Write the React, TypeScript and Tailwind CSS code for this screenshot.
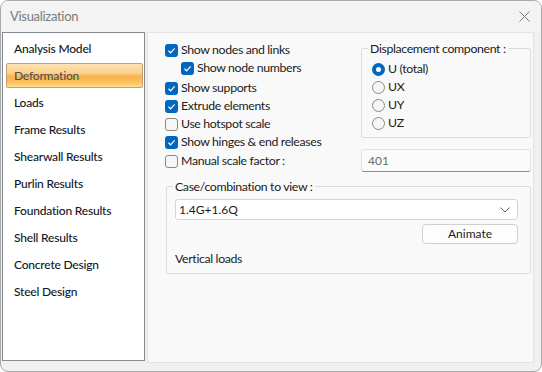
import React from "react";

const font = { fontFamily: 'Lato, "Noto Sans", sans-serif' };

const items = [
  "Analysis Model",
  "Deformation",
  "Loads",
  "Frame Results",
  "Shearwall Results",
  "Purlin Results",
  "Foundation Results",
  "Shell Results",
  "Concrete Design",
  "Steel Design",
];

function Check({ on, label }: { on: boolean; label: string }) {
  return (
    <div className="flex items-center h-[18px]">
      {on ? (
        <span className="w-[13px] h-[13px] rounded-[3px] bg-[#0067c0] flex items-center justify-center">
          <svg width="9" height="9" viewBox="0 0 9 9">
            <path d="M1.5 4.8 L3.6 6.8 L7.6 2.4" fill="none" stroke="#fff" strokeWidth="1.2" />
          </svg>
        </span>
      ) : (
        <span className="w-[13px] h-[13px] rounded-[3px] border border-[#8a8a8a] bg-[#f6f6f6]" />
      )}
      <span className="ml-[3px] text-[12.3px] tracking-[-0.35px] text-[#1b1b1b]">{label}</span>
    </div>
  );
}

function Radio({ on, label }: { on: boolean; label: string }) {
  return (
    <div className="flex items-center h-[18px]">
      {on ? (
        <span className="w-[13px] h-[13px] rounded-full bg-[#0067c0] flex items-center justify-center">
          <span className="w-[5px] h-[5px] rounded-full bg-white" />
        </span>
      ) : (
        <span className="w-[13px] h-[13px] rounded-full border border-[#8a8a8a] bg-[#f6f6f6]" />
      )}
      <span className="ml-[3px] text-[12.3px] tracking-[-0.35px] text-[#1b1b1b]">{label}</span>
    </div>
  );
}

export default function App() {
  return (
    <div style={font} className="w-[542px] h-[372px] bg-white">
      <div className="w-[542px] h-[372px] rounded-[8px] border border-[#a9a9a9] bg-[#f0f0f0] overflow-hidden flex flex-col">
        {/* title bar */}
        <div className="h-[31px] bg-[#f3f3f3] flex items-center justify-between pl-[9px] pr-[11px] shrink-0">
          <span className="text-[13px] tracking-[-0.3px] text-[#7a7a7a]">Visualization</span>
          <svg width="11" height="11" viewBox="0 0 11 11">
            <path d="M0.5 0.5 L10.5 10.5 M10.5 0.5 L0.5 10.5" stroke="#7a7a7a" strokeWidth="1" />
          </svg>
        </div>

        <div className="flex pl-[1px] gap-[2px]">
          {/* list */}
          <div className="w-[143px] h-[329px] bg-white border border-[#858a93] pt-[2px] pl-[3px] pr-[1px]">
            {items.map((it) =>
              it === "Deformation" ? (
                <div
                  key={it}
                  className="h-[25px] my-[1px] rounded-[2px] border border-[#c4a06a] flex items-center pl-[7px] text-[12px] tracking-[-0.2px] font-medium text-[#505050]"
                  style={{
                    background:
                      "linear-gradient(to bottom, #fde3b4 0%, #fbcf8a 40%, #f8b14c 55%, #fbc15f 80%, #fde08e 100%)",
                  }}
                >
                  {it}
                </div>
              ) : (
                <div key={it} className="h-[27px] flex items-center pl-[8px] text-[12px] tracking-[-0.2px] font-medium text-[#111827]">
                  {it}
                </div>
              )
            )}
          </div>

          {/* settings panel */}
          <div className="w-[387px] h-[331px] bg-[#f9f9f9] border border-[#e3e3e3] pl-[17px] pr-[2px]">
            <div className="flex">
              <div className="w-[196px] pt-[8px]">
                <Check on label="Show nodes and links" />
                <div className="pl-[16px]">
                  <Check on label="Show node numbers" />
                </div>
                <div className="h-[2px]" />
                <Check on label="Show supports" />
                <Check on label="Extrude elements" />
                <Check on={false} label="Use hotspot scale" />
                <Check on label="Show hinges & end releases" />
                <div className="h-[1px]" />
                <Check on={false} label="Manual scale factor :" />
              </div>
              <div className="flex-1 pt-[15px]">
                <div className="relative h-[90px] border border-[#dcdcdc] rounded-[2px] pl-[10px] pt-[11px]">
                  <span className="absolute -top-[9px] left-[6px] px-[2px] bg-[#f9f9f9] text-[12.3px] tracking-[-0.35px] text-[#1b1b1b]">
                    Displacement component :
                  </span>
                  <Radio on label="U (total)" />
                  <Radio on={false} label="UX" />
                  <Radio on={false} label="UY" />
                  <Radio on={false} label="UZ" />
                </div>
                <div className="mt-[11px] h-[23px] border border-[#e0e0e0] border-b-[#8a8a8a] bg-[#fbfbfb] rounded-[3px] flex items-center pl-[6px] text-[12px] text-[#6d6d6d]">
                  401
                </div>
              </div>
            </div>

            <div className="relative mt-[14px] ml-[1px] h-[88px] border border-[#dcdcdc] rounded-[2px] pt-[12px] pl-[8px] pr-[12px]">
              <span className="absolute -top-[9px] left-[6px] px-[2px] bg-[#f9f9f9] text-[12.3px] tracking-[-0.35px] text-[#1b1b1b]">
                Case/combination to view :
              </span>
              <div className="h-[21px] bg-white border border-[#d5d5d5] rounded-[3px] flex items-center justify-between pl-[3px] pr-[7px] text-[12px] text-[#1b1b1b]">
                <span>1.4G+1.6Q</span>
                <svg width="10" height="6" viewBox="0 0 10 6">
                  <path d="M0.5 0.5 L5 5 L9.5 0.5" fill="none" stroke="#606060" strokeWidth="1" />
                </svg>
              </div>
              <div className="flex justify-end mt-[4px]">
                <div className="w-[96px] h-[20px] bg-[#fdfdfd] border border-[#d0d0d0] rounded-[4px] flex items-center justify-center text-[12px] text-[#1b1b1b]">
                  Animate
                </div>
              </div>
              <div className="mt-[6px] text-[12.3px] tracking-[-0.35px] text-[#1b1b1b]">Vertical loads</div>
            </div>
          </div>
        </div>
      </div>
    </div>
  );
}
